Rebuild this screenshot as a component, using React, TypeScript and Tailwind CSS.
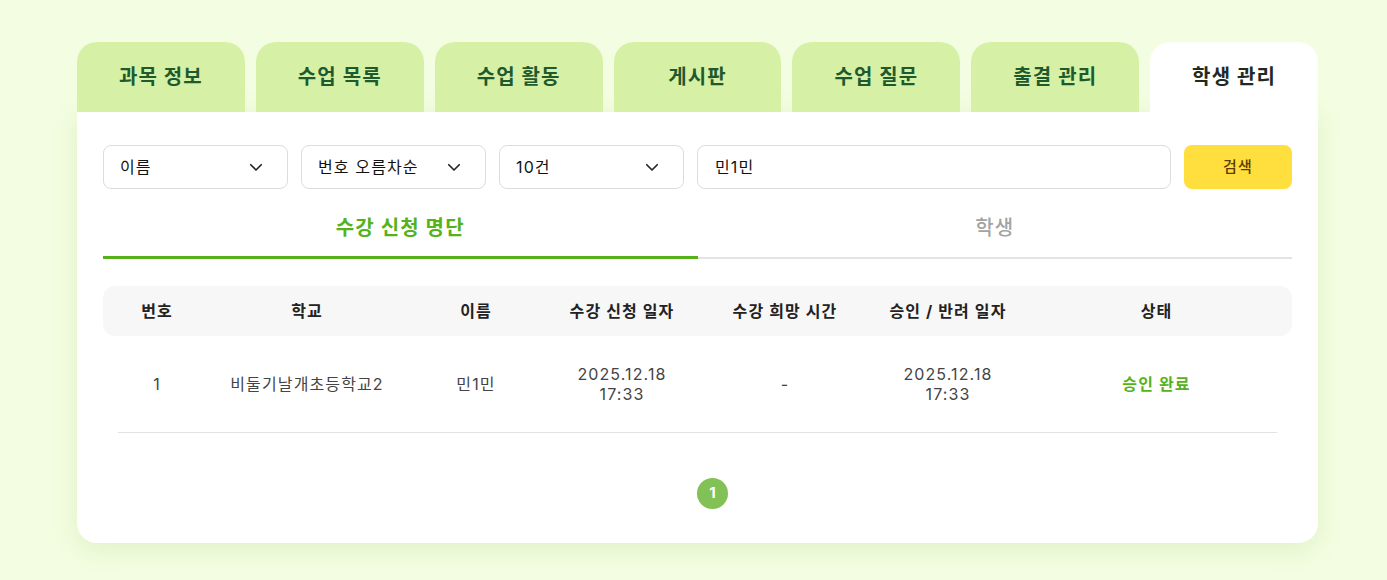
import React from "react";

const tabs = ["과목 정보", "수업 목록", "수업 활동", "게시판", "수업 질문", "출결 관리", "학생 관리"];

function Chevron() {
  return (
    <svg width="18" height="18" viewBox="0 0 24 24" fill="none" stroke="#222" strokeWidth="2.2" strokeLinecap="round" strokeLinejoin="round">
      <path d="M5 9l7 7 7-7" />
    </svg>
  );
}

function Select({ label }: { label: string }) {
  return (
    <div className="flex h-[44px] w-[185px] items-center justify-between rounded-[8px] border border-[#dcdcdc] bg-white pl-[16px] pr-[22px] text-[16px] text-[#111]">
      <span>{label}</span>
      <Chevron />
    </div>
  );
}

const cols = "grid grid-cols-[108px_192px_146px_146px_180px_146px_1fr]";

export default function App() {
  return (
    <div className="min-h-[580px] w-full bg-[#f3fde1] pl-[77px] pt-[42px] tracking-[0.07em]" style={{ fontFamily: 'Inter, "Noto Sans CJK KR", "Noto Sans", sans-serif' }}>
      <div className="w-[1241px]">
        <div className="flex gap-[11px]">
          {tabs.map((t, i) => {
            const active = i === tabs.length - 1;
            return (
              <div
                key={t}
                className={
                  "flex h-[70px] w-[168px] items-center justify-center rounded-t-[20px] text-[20px] font-bold " +
                  (active ? "bg-white text-[#1f2a22]" : "bg-[#d6f1a6] text-[#1f5a2e]")
                }
              >
                {t}
              </div>
            );
          })}
        </div>
        <div className="rounded-b-[20px] bg-white px-[26px] pb-[34px] pt-[33px] shadow-[0_6px_24px_rgba(140,190,80,0.18)]">
          <div className="flex gap-[13px]">
            <Select label="이름" />
            <Select label="번호 오름차순" />
            <Select label="10건" />
            <div className="flex h-[44px] w-[474px] items-center rounded-[8px] border border-[#dcdcdc] bg-white px-[17px] text-[16px] text-[#111]">
              민1민
            </div>
            <div className="flex h-[44px] flex-1 items-center justify-center rounded-[8px] bg-[#ffdf3d] text-[15px] font-medium text-[#5a3c00]">
              검색
            </div>
          </div>

          <div className="mt-[10px] flex">
            <div className="flex h-[60px] flex-1 items-center justify-center border-b-[3px] border-[#56b21b] text-[20px] font-bold text-[#56b21b]">
              수강 신청 명단
            </div>
            <div className="flex h-[60px] flex-1 items-center justify-center border-b-[2px] border-[#e3e3e3] text-[20px] font-medium text-[#a3a3a3]">
              학생
            </div>
          </div>

          <div className={cols + " mt-[27px] h-[50px] items-center rounded-[12px] bg-[#f7f7f7] text-center text-[16px] font-bold text-[#222]"}>
            <div>번호</div>
            <div>학교</div>
            <div>이름</div>
            <div>수강 신청 일자</div>
            <div>수강 희망 시간</div>
            <div>승인 / 반려 일자</div>
            <div>상태</div>
          </div>

          <div className={cols + " h-[96px] items-center text-center text-[16px] leading-[20px] text-[#444]"}>
            <div>1</div>
            <div>비둘기날개초등학교2</div>
            <div>민1민</div>
            <div>2025.12.18<br />17:33</div>
            <div>-</div>
            <div>2025.12.18<br />17:33</div>
            <div className="font-bold text-[#56b21b]">승인 완료</div>
          </div>
          <div className="mx-[15px] h-px bg-[#e3e3e3]" />

          <div className="mt-[45px] flex justify-center pl-[30px]">
            <div className="flex h-[31px] w-[31px] items-center justify-center rounded-full bg-[#82c155] text-[15px] font-bold tracking-normal text-white">
              1
            </div>
          </div>
        </div>
      </div>
    </div>
  );
}
